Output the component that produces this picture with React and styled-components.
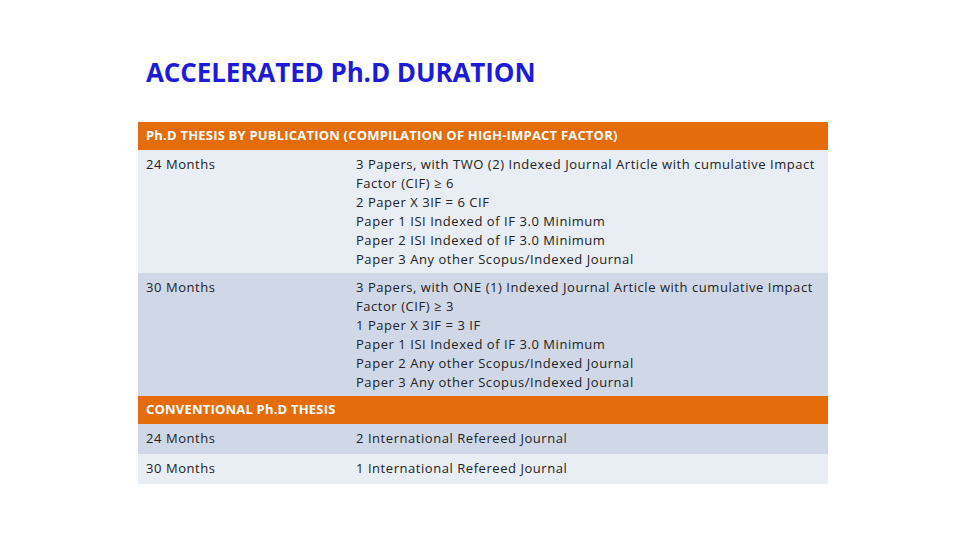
import styled, { createGlobalStyle } from "styled-components";

const Global = createGlobalStyle`
  html, body {
    margin: 0;
    padding: 0;
    background: #ffffff;
  }
  body {
    font-family: "Open Sans", "Liberation Sans", sans-serif;
  }
`;

const Slide = styled.div`
  width: 960px;
  height: 540px;
  box-sizing: border-box;
  padding: 56px 0 0 138px;
`;

const Title = styled.h1`
  margin: 0 0 34px 8px;
  font-size: 26px;
  line-height: 32px;
  font-weight: 700;
  color: #1c1cd6;
  letter-spacing: -0.1px;
`;

const Table = styled.div`
  width: 690px;
  display: grid;
  grid-template-columns: 210px 1fr;
  font-size: 13px;
  line-height: 19px;
  letter-spacing: 0.55px;
  color: #222222;
`;

const Section = styled.div`
  grid-column: 1 / -1;
  background: #e46c0a;
  color: #ffffff;
  font-weight: 700;
  letter-spacing: 0.2px;
  padding: 4px 8px 5px;
  height: 19px;
`;

const Cell = styled.div`
  background: ${({ $shade }) => ($shade ? "#d0d8e8" : "#e9edf4")};
  padding: ${({ $tall }) => ($tall ? "5px 8px 4px" : "5px 8px 6px")};
`;

const Line = styled.div`
  white-space: nowrap;
`;

const groups = [
  {
    title: "Ph.D THESIS BY PUBLICATION (COMPILATION OF HIGH-IMPACT FACTOR)",
    rows: [
      {
        label: "24 Months",
        lines: [
          "3 Papers, with TWO (2) Indexed Journal Article with cumulative Impact",
          "Factor (CIF) ≥ 6",
          "2 Paper X 3IF = 6 CIF",
          "Paper 1 ISI Indexed of IF 3.0 Minimum",
          "Paper 2 ISI Indexed of IF 3.0 Minimum",
          "Paper 3 Any other Scopus/Indexed Journal",
        ],
        shade: false,
      },
      {
        label: "30 Months",
        lines: [
          "3 Papers, with ONE (1) Indexed Journal Article with cumulative Impact",
          "Factor (CIF) ≥ 3",
          "1 Paper X 3IF = 3 IF",
          "Paper 1 ISI Indexed of IF 3.0 Minimum",
          "Paper 2 Any other Scopus/Indexed Journal",
          "Paper 3 Any other Scopus/Indexed Journal",
        ],
        shade: true,
      },
    ],
  },
  {
    title: "CONVENTIONAL Ph.D THESIS",
    rows: [
      { label: "24 Months", lines: ["2 International Refereed Journal"], shade: true },
      { label: "30 Months", lines: ["1 International Refereed Journal"], shade: false },
    ],
  },
];

export default function App() {
  return (
    <>
      <Global />
      <Slide>
        <Title>ACCELERATED Ph.D DURATION</Title>
        <Table>
          {groups.map((g) => [
            <Section key={g.title}>{g.title}</Section>,
            ...g.rows.flatMap((r, i) => {
              const tall = r.lines.length > 1;
              return [
                <Cell key={g.title + i + "a"} $shade={r.shade} $tall={tall}>
                  {r.label}
                </Cell>,
                <Cell key={g.title + i + "b"} $shade={r.shade} $tall={tall}>
                  {r.lines.map((l) => (
                    <Line key={l}>{l}</Line>
                  ))}
                </Cell>,
              ];
            }),
          ])}
        </Table>
      </Slide>
    </>
  );
}
